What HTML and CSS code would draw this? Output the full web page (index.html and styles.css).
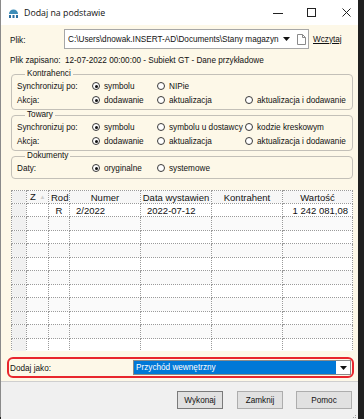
FILE: index.html
```html
<!DOCTYPE html>
<html lang="pl">
<head>
<meta charset="utf-8">
<title>Dodaj na podstawie</title>
<link rel="stylesheet" href="styles.css">
</head>
<body>
<div class="window">
  <div class="titlebar">
    <svg class="app-icon" width="11" height="9" viewBox="0 0 11 9">
      <path d="M1 5 A4.5 4.5 0 0 1 10 5 Z" fill="#3d8db8"/>
      <rect x="1" y="6" width="2" height="3" fill="#2a6fa0"/>
      <rect x="4.5" y="6" width="2" height="3" fill="#2a6fa0"/>
      <rect x="8" y="6" width="2" height="3" fill="#2a6fa0"/>
    </svg>
    <span class="title">Dodaj na podstawie</span>
    <div class="controls">
      <svg class="ctl-min" width="10" height="10" viewBox="0 0 10 10"><path d="M0 5.5 H10" stroke="#222" stroke-width="1"/></svg>
      <svg class="ctl-max" width="9" height="9" viewBox="0 0 9 9"><rect x="0.5" y="0.5" width="8" height="8" fill="none" stroke="#222" stroke-width="1"/></svg>
      <svg class="ctl-close" width="9" height="9" viewBox="0 0 9 9"><path d="M0.5 0.5 L8.5 8.5 M8.5 0.5 L0.5 8.5" stroke="#222" stroke-width="1"/></svg>
    </div>
  </div>

  <div class="content">
    <div class="file-row">
      <span class="file-label">Plik:</span>
      <div class="combo">
        <span class="combo-text">C:\Users\dnowak.INSERT-AD\Documents\Stany magazyn</span>
        <svg class="combo-arrow" width="7" height="4" viewBox="0 0 7 4"><path d="M0 0 H7 L3.5 4 Z" fill="#111"/></svg>
        <svg class="file-icon" width="9" height="11" viewBox="0 0 9 11"><path d="M0.5 0.5 H5.5 L8.5 3.5 V10.5 H0.5 Z" fill="#fff" stroke="#8a8a8a"/><path d="M5.5 0.5 V3.5 H8.5" fill="none" stroke="#8a8a8a"/></svg>
      </div>
      <a class="link" href="#">Wczytaj</a>
    </div>

    <div class="saved-row">
      <span class="saved-label">Plik zapisano:</span>
      <span>12-07-2022 00:00:00 - Subiekt GT - Dane przykładowe</span>
    </div>

    <fieldset class="group">
      <legend>Kontrahenci</legend>
      <div class="opts">
        <span class="opt-label">Synchronizuj po:</span>
        <span class="radio on"><i></i>symbolu</span>
        <span class="radio"><i></i>NIPie</span>
        <span></span>
        <span class="opt-label">Akcja:</span>
        <span class="radio on"><i></i>dodawanie</span>
        <span class="radio"><i></i>aktualizacja</span>
        <span class="radio"><i></i>aktualizacja i dodawanie</span>
      </div>
    </fieldset>

    <fieldset class="group">
      <legend>Towary</legend>
      <div class="opts">
        <span class="opt-label">Synchronizuj po:</span>
        <span class="radio on"><i></i>symbolu</span>
        <span class="radio"><i></i>symbolu u dostawcy</span>
        <span class="radio"><i></i>kodzie kreskowym</span>
        <span class="opt-label">Akcja:</span>
        <span class="radio on"><i></i>dodawanie</span>
        <span class="radio"><i></i>aktualizacja</span>
        <span class="radio"><i></i>aktualizacja i dodawanie</span>
      </div>
    </fieldset>

    <fieldset class="group group-last">
      <legend>Dokumenty</legend>
      <div class="opts">
        <span class="opt-label">Daty:</span>
        <span class="radio on"><i></i>oryginalne</span>
        <span class="radio"><i></i>systemowe</span>
        <span></span>
      </div>
    </fieldset>

    <div class="grid-wrap">
      <table class="grid">
        <colgroup>
          <col class="c-ind"><col class="c-z"><col class="c-rod"><col class="c-num"><col class="c-date"><col class="c-kon"><col class="c-val">
        </colgroup>
        <thead>
          <tr>
            <th class="ind"></th>
            <th class="zh">Z <span class="sort">▲</span></th>
            <th>Rod</th>
            <th>Numer</th>
            <th class="clip">Data wystawien</th>
            <th>Kontrahent</th>
            <th>Wartość</th>
          </tr>
        </thead>
        <tbody>
          <tr><td class="ind"></td><td></td><td class="ctr">R</td><td class="pad">2/2022</td><td class="pad">2022-07-12</td><td></td><td class="num">1 242 081,08</td></tr>
          <tr><td class="ind"></td><td></td><td></td><td></td><td></td><td></td><td></td></tr>
          <tr><td class="ind"></td><td></td><td></td><td></td><td></td><td></td><td></td></tr>
          <tr><td class="ind"></td><td></td><td></td><td></td><td></td><td></td><td></td></tr>
          <tr><td class="ind"></td><td></td><td></td><td></td><td></td><td></td><td></td></tr>
          <tr><td class="ind"></td><td></td><td></td><td></td><td></td><td></td><td></td></tr>
          <tr><td class="ind"></td><td></td><td></td><td></td><td></td><td></td><td></td></tr>
          <tr><td class="ind"></td><td></td><td></td><td></td><td></td><td></td><td></td></tr>
          <tr><td class="ind"></td><td></td><td></td><td></td><td></td><td></td><td></td></tr>
          <tr><td class="ind"></td><td></td><td></td><td></td><td></td><td></td><td></td></tr>
          <tr><td class="ind"></td><td></td><td></td><td></td><td></td><td></td><td></td></tr>
        </tbody>
      </table>
    </div>

    <div class="addas">
      <span class="addas-label">Dodaj jako:</span>
      <div class="select">
        <span class="select-value">Przychód wewnętrzny</span>
        <span class="select-btn"><svg width="7" height="4" viewBox="0 0 7 4"><path d="M0 0 H7 L3.5 4 Z" fill="#111"/></svg></span>
      </div>
    </div>
  </div>

  <div class="footer">
    <button class="btn btn-default">Wykonaj</button>
    <button class="btn btn-mid">Zamknij</button>
    <button class="btn btn-help">Pomoc</button>
    <svg class="grip" width="8" height="8" viewBox="0 0 8 8">
      <g fill="#a0a0a0"><rect x="6" y="0" width="1" height="1"/><rect x="4" y="2" width="1" height="1"/><rect x="6" y="2" width="1" height="1"/><rect x="2" y="4" width="1" height="1"/><rect x="4" y="4" width="1" height="1"/><rect x="6" y="4" width="1" height="1"/><rect x="0" y="6" width="1" height="1"/><rect x="2" y="6" width="1" height="1"/><rect x="4" y="6" width="1" height="1"/><rect x="6" y="6" width="1" height="1"/></g>
    </svg>
  </div>
</div>
</body>
</html>
```

FILE: styles.css
```css
html, body {
  margin: 0;
  padding: 0;
  background: #1f1f1f;
}
body {
  width: 364px;
  height: 419px;
  overflow: hidden;
  font-family: "Liberation Sans", Arial, sans-serif;
  font-size: 8.2px;
  color: #111;
}
.window {
  width: 357px;
  height: 417px;
  border-left: 1px solid #8a8a8a;
  display: flex;
  flex-direction: column;
  background: #fdf8e8;
}
.titlebar {
  height: 25px;
  flex: none;
  background: #ffffff;
  display: flex;
  align-items: center;
  padding-left: 7px;
}
.app-icon {
  margin-top: 2px;
}
.title {
  font-family: "Open Sans", "Noto Sans", sans-serif;
  font-size: 8.8px;
  color: #111;
  margin-left: 5px;
  margin-top: 1px;
}
.controls {
  margin-left: auto;
  display: flex;
  align-items: center;
  height: 100%;
}
.ctl-min { margin-right: 24px; }
.ctl-max { margin-right: 26px; }
.ctl-close { margin-right: 7px; }

.content {
  flex: 1;
  padding: 4px 5px 0 10px;
  display: flex;
  flex-direction: column;
}
.file-row {
  display: flex;
  align-items: center;
  height: 20px;
}
.file-label {
  width: 54px;
  margin-left: -1px;
  padding-top: 3px;
}
.combo {
  width: 238px;
  height: 18px;
  border: 1px solid #a7a7a7;
  background: #fff;
  display: flex;
  align-items: center;
  padding: 0 2px 0 3px;
}
.combo-text {
  flex: 1;
  white-space: nowrap;
  overflow: hidden;
}
.combo-arrow {
  margin: 0 7px 0 4px;
}
.link {
  margin-left: 4px;
  color: #111;
  text-decoration: underline;
}
.saved-row {
  display: flex;
  height: 14px;
  align-items: center;
  margin-top: 4px;
}
.saved-label {
  width: 55px;
  margin-left: -1px;
}

.group {
  margin: 2px 0 0 0;
  padding: 0 5px 2px 5px;
  border: 1px solid #c3c0b8;
  border-radius: 4px;
}
.group + .group { margin-top: 0; }
.group-last { padding-bottom: 3px; }
.group legend {
  padding: 0 2px;
  margin-left: 8px;
  line-height: 10px;
  height: 10px;
}
.opts {
  display: grid;
  grid-template-columns: 75px 65px 88px 1fr;
  grid-auto-rows: 14px;
  align-items: center;
}
.radio {
  display: flex;
  align-items: center;
  white-space: nowrap;
}
.radio i {
  display: inline-block;
  box-sizing: border-box;
  width: 8px;
  height: 8px;
  border: 1px solid #3a3a3a;
  border-radius: 50%;
  background: #fff;
  margin-right: 4px;
  position: relative;
  flex: none;
}
.radio.on i::after {
  content: "";
  position: absolute;
  left: 1.5px;
  top: 1.5px;
  width: 3px;
  height: 3px;
  border-radius: 50%;
  background: #111;
}

.grid-wrap {
  margin-top: 11px;
  height: 161px;
  overflow: hidden;
}
.grid {
  width: 341px;
  table-layout: fixed;
  border-collapse: collapse;
  font-size: 9.5px;
  color: #111;
  background: #fff;
}
.c-ind { width: 15px; }
.c-z { width: 22px; }
.c-rod { width: 21px; }
.c-num { width: 71px; }
.c-date { width: 71px; }
.c-kon { width: 71px; }
.c-val { width: 70px; }
.grid th, .grid td {
  border: 1px dotted #9a9a9a;
  padding: 0 2px;
  white-space: nowrap;
  overflow: hidden;
  line-height: 11px;
}
.grid thead tr { height: 13px; }
.grid th {
  font-weight: normal;
  background: #f7f7f7;
  text-align: center;
}
.grid th.clip { padding: 0 1px; }
.grid th.zh { text-align: left; padding-left: 3px; }
.sort {
  color: #cfcfcf;
  font-size: 6px;
  vertical-align: 1px;
  margin-left: 1px;
}
.grid tbody tr:nth-child(odd) { height: 13px; }
.grid tbody tr:nth-child(even) { height: 14px; background: #fafafa; }
.grid tbody tr:nth-child(1) { background: #fff; }
.grid .ind { background: #f1f1f1; }
.grid td.ctr { text-align: center; }
.grid td.pad { padding-left: 6px; }
.grid td.num { text-align: right; padding-right: 4px; }

.addas {
  margin: 6px -1px 0 -4px;
  height: 17px;
  border: 2px solid #e8262d;
  border-radius: 6px;
  display: flex;
  align-items: center;
  padding: 0 0 0 1px;
}
.addas-label {
  width: 123px;
  padding-top: 2px;
}
.select {
  flex: 1;
  height: 15px;
  margin-right: 1px;
  box-sizing: border-box;
  border: 1px solid #8a8a8a;
  background: #fff;
  display: flex;
}
.select-value {
  flex: 1;
  background: #0078d7;
  color: #fff;
  padding-left: 2px;
  line-height: 13px;
}
.select-btn {
  width: 14px;
  display: flex;
  align-items: center;
  justify-content: center;
}

.footer {
  height: 33px;
  flex: none;
  margin-top: 3px;
  background: #f0f0f0;
  border-top: 1px solid #cfcfcf;
  display: flex;
  align-items: flex-start;
  padding: 9px 0 0 176px;
  position: relative;
}
.btn {
  height: 18px;
  box-sizing: border-box;
  border: 1px solid #adadad;
  background: #e1e1e1;
  font-family: "Liberation Sans", Arial, sans-serif;
  font-size: 8.2px;
  color: #111;
  padding: 0;
}
.btn-default { width: 46px; border-color: #7a7a7a; margin-right: 14px; }
.btn-mid { width: 46px; margin-right: 13px; }
.btn-help { width: 56px; }
.grip {
  position: absolute;
  right: 1px;
  bottom: 1px;
}
```
